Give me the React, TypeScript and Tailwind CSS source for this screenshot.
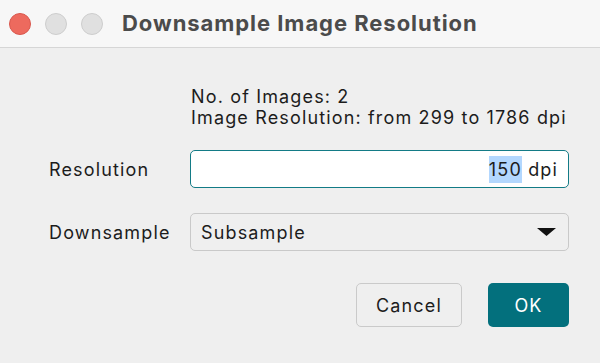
import React from "react";

export default function App() {
  const font = { fontFamily: "Inter, 'Noto Sans', 'Liberation Sans', sans-serif" };
  return (
    <div className="w-[600px] h-[363px] bg-[#efefef] flex flex-col overflow-hidden" style={font}>
      <div className="h-[48px] bg-[#f7f7f7] border-b border-[#d6d6d6] flex items-center pl-[9px]">
        <div className="flex gap-[14px]">
          <div className="w-[22px] h-[22px] rounded-full bg-[#ed6a5e] border border-[#d9574d]" />
          <div className="w-[22px] h-[22px] rounded-full bg-[#e0e0e0] border border-[#cdcdcd]" />
          <div className="w-[22px] h-[22px] rounded-full bg-[#e0e0e0] border border-[#cdcdcd]" />
        </div>
        <div className="ml-[19px] text-[22px] font-bold text-[#4b4b4b] tracking-[0.95px] leading-none pb-[2px]">
          Downsample Image Resolution
        </div>
      </div>
      <div className="flex flex-col pl-[49px] pr-[31px] pt-[38px] text-[18px] tracking-[1.15px] text-[#1c1c1c]">
        <div className="ml-[142px] leading-[21px]">
          <div>No. of Images: 2</div>
          <div>Image Resolution: from 299 to 1786 dpi</div>
        </div>
        <div className="grid grid-cols-[141px_1fr] items-center gap-y-[25px] mt-[22px]">
          <div>Resolution</div>
          <div className="h-[38px] bg-white border-[1.5px] border-[#137b86] rounded-[5px] flex items-center justify-end pr-[10px]">
            <span className="bg-[#b3d7fe]">150</span>
            <span>&nbsp;dpi</span>
          </div>
          <div>Downsample</div>
          <div className="h-[38px] bg-[#efefef] border border-[#c9c9c9] rounded-[5px] flex items-center justify-between pl-[10px] pr-[12px]">
            <span>Subsample</span>
            <svg width="19" height="8" viewBox="0 0 19 8">
              <polygon points="0,0 19,0 9.5,8" fill="#111" />
            </svg>
          </div>
        </div>
        <div className="flex justify-end gap-[26px] mt-[32px]">
          <div className="w-[106px] h-[44px] rounded-[5px] border border-[#cacaca] bg-[#efefef] flex items-center justify-center">
            Cancel
          </div>
          <div className="w-[81px] h-[44px] rounded-[5px] bg-[#03707d] flex items-center justify-center text-white">
            OK
          </div>
        </div>
      </div>
    </div>
  );
}
